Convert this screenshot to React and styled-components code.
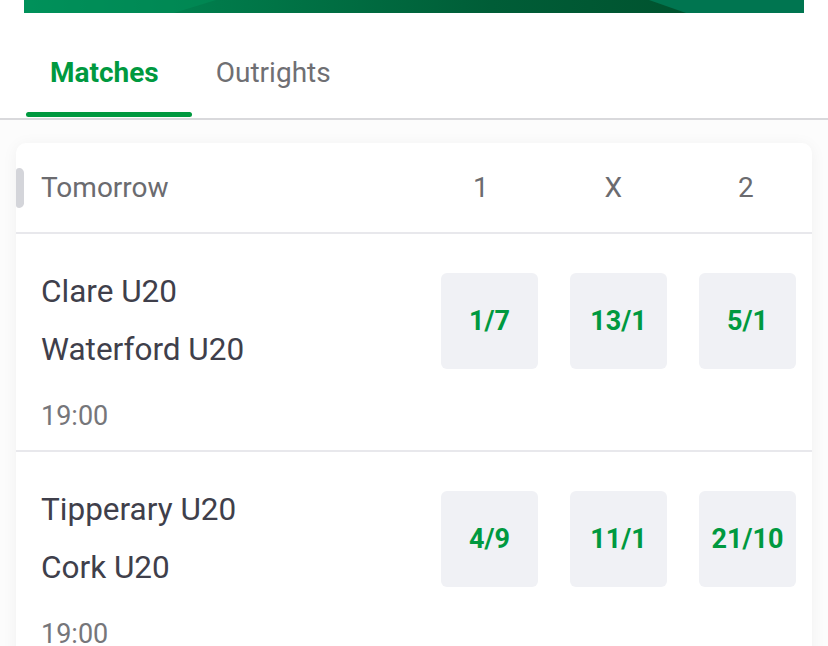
import styled, { createGlobalStyle } from "styled-components";

const GlobalStyle = createGlobalStyle`
  body {
    margin: 0;
    background: #ffffff;
    font-family: Roboto, "Liberation Sans", sans-serif;
  }
`;

const matches = [
  { home: "Clare U20", away: "Waterford U20", time: "19:00", odds: ["1/7", "13/1", "5/1"] },
  { home: "Tipperary U20", away: "Cork U20", time: "19:00", odds: ["4/9", "11/1", "21/10"] },
];

const Banner = () => (
  <S.BannerWrap>
    <svg width="780" height="13" viewBox="0 0 780 13" preserveAspectRatio="none">
      <defs>
        <linearGradient id="bg" x1="0" y1="0" x2="1" y2="0">
          <stop offset="0" stopColor="#00935c" />
          <stop offset="0.25" stopColor="#007a4a" />
          <stop offset="0.6" stopColor="#005d37" />
          <stop offset="0.85" stopColor="#00532f" />
          <stop offset="1" stopColor="#00744b" />
        </linearGradient>
      </defs>
      <rect width="780" height="13" fill="url(#bg)" />
      <polygon points="0,0 192,0 150,13 0,13" fill="#00905a" opacity="0.55" />
      <polygon points="625,0 780,0 780,13 662,13" fill="#007550" />
    </svg>
  </S.BannerWrap>
);

const MatchRow = ({ match }) => (
  <S.Row>
    <S.RowMain>
      <S.Teams>
        <S.Team>{match.home}</S.Team>
        <S.Team>{match.away}</S.Team>
      </S.Teams>
      <S.Odds>
        {match.odds.map((o, i) => (
          <S.OddButton key={i}>{o}</S.OddButton>
        ))}
      </S.Odds>
    </S.RowMain>
    <S.Time>{match.time}</S.Time>
  </S.Row>
);

export default function App() {
  return (
    <>
      <GlobalStyle />
      <S.Page>
        <Banner />
        <S.Tabs>
          <S.Tab $active>Matches</S.Tab>
          <S.Tab>Outrights</S.Tab>
        </S.Tabs>
        <S.Content>
          <S.Card>
            <S.Header>
              <S.Handle />
              <S.Title>Tomorrow</S.Title>
              <S.Columns>
                <span>1</span>
                <span>X</span>
                <span>2</span>
              </S.Columns>
            </S.Header>
            {matches.map((m, i) => (
              <MatchRow key={i} match={m} />
            ))}
          </S.Card>
        </S.Content>
      </S.Page>
    </>
  );
}

const S = {};

S.Page = styled.div`
  width: 828px;
  height: 646px;
  overflow: hidden;
  background: #fcfcfc;
`;

S.BannerWrap = styled.div`
  background: #ffffff;
  padding: 0 24px;
  height: 13px;
  svg {
    display: block;
  }
`;

S.Tabs = styled.nav`
  display: flex;
  height: 105px;
  padding-left: 26px;
  background: #ffffff;
  border-bottom: 2px solid #d9d9dc;
`;

S.Tab = styled.div`
  position: relative;
  display: flex;
  align-items: center;
  padding: 13px 33px 0 24px;
  font-size: 28px;
  font-weight: ${({ $active }) => ($active ? 700 : 400)};
  color: ${({ $active }) => ($active ? "#00993f" : "#6f6f73")};

  &::after {
    content: "";
    display: ${({ $active }) => ($active ? "block" : "none")};
    position: absolute;
    left: 0;
    right: 0;
    bottom: 1px;
    height: 5px;
    border-radius: 3px;
    background: #00993f;
  }
`;

S.Content = styled.div`
  padding: 23px 16px 0;
`;

S.Card = styled.div`
  background: #ffffff;
  border-radius: 10px;
  box-shadow: 0 2px 16px rgba(0, 0, 0, 0.05);
`;

S.Header = styled.div`
  display: flex;
  align-items: center;
  height: 89px;
  border-bottom: 2px solid #e8e8ec;
`;

S.Handle = styled.div`
  width: 8px;
  height: 40px;
  border-radius: 4px 6px 6px 4px;
  background: #d4d5da;
`;

S.Title = styled.div`
  margin-left: 17px;
  flex: 1;
  font-size: 28px;
  color: #6b6b6f;
`;

S.Columns = styled.div`
  display: grid;
  grid-template-columns: repeat(3, 132.5px);
  font-size: 28px;
  color: #6b6b6f;
  text-align: center;
`;

S.Row = styled.div`
  padding: 29px 16px 18px 25px;
  border-bottom: 2px solid #e8e8ec;
`;

S.RowMain = styled.div`
  display: flex;
  align-items: center;
  justify-content: space-between;
`;

S.Teams = styled.div`
  display: flex;
  flex-direction: column;
`;

S.Team = styled.div`
  font-size: 31.5px;
  line-height: 58px;
  color: #3f3f4b;
`;

S.Odds = styled.div`
  display: grid;
  grid-template-columns: repeat(3, 97px);
  gap: 32px;
`;

S.OddButton = styled.div`
  height: 96px;
  display: flex;
  align-items: center;
  justify-content: center;
  border-radius: 6px;
  background: #f0f1f5;
  color: #00993f;
  font-size: 27px;
  font-weight: 700;
`;

S.Time = styled.div`
  margin-top: 21px;
  font-size: 27px;
  line-height: 32px;
  color: #76767a;
`;
